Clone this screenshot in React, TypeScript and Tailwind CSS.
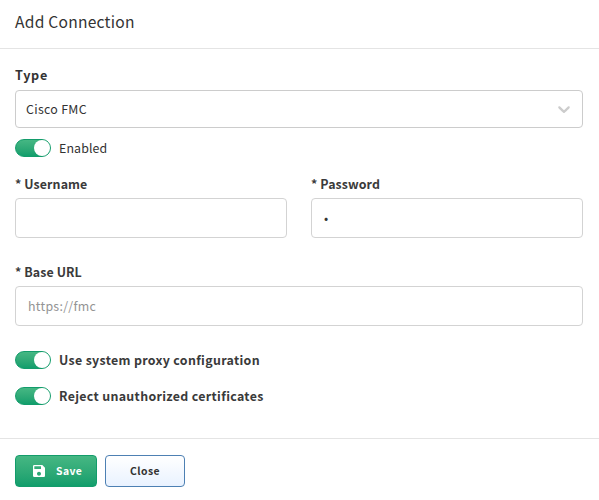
import React from 'react';

function Toggle({ label, bold = false }: { label: string; bold?: boolean }) {
  return (
    <label className="flex h-[18px] items-center gap-2">
      <span className="flex h-[18px] w-9 items-center justify-end rounded-full border border-[#139c6b] bg-linear-to-b from-[#45b783] to-[#109e6c]">
        <span className="size-4 rounded-full bg-white" />
      </span>
      <span className={bold ? 'text-[12.4px] leading-[18px] font-bold tracking-[0.33px] text-[#3a3a3a]' : 'text-[12.4px] leading-[18px] tracking-[0.1px]'}>{label}</span>
    </label>
  );
}

function Field({ label, value, placeholder, type = 'text' }: { label: string; value?: string; placeholder?: string; type?: string }) {
  return (
    <label className="flex flex-1 flex-col">
      <span className="h-6 text-[12.4px] leading-5 font-bold tracking-[0.1px] text-[#3a3a3a]">{label}</span>
      <input
        type={type}
        defaultValue={value}
        placeholder={placeholder}
        className="h-10 w-full rounded-[4px] border border-[#d3d3d3] bg-white px-3 text-[12.4px] tracking-[0.27px] outline-none placeholder:text-[#949494]"
      />
    </label>
  );
}

export default function App() {
  return (
    <div className="h-[500px] w-[599px] overflow-hidden bg-white font-['Noto_Sans_CJK_JP','Noto_Sans_CJK_SC',sans-serif] text-[#333]">
      <header className="h-[49px] border-b border-[#e4e4e4] px-[15px] pt-[7px]">
        <h1 className="text-[15.6px] leading-7 tracking-[0.24px]">Add Connection</h1>
      </header>
      <main className="h-[389px] pt-4 pr-4 pl-[15px]">
        <div className="h-[25px] text-[12.6px] leading-5 font-bold tracking-[0.7px]">Type</div>
        <div className="flex h-[38px] items-center justify-between rounded-[4px] border border-[#ccc] pr-2 pl-[10px] text-[12.4px] tracking-[0.3px]">
          <span>Cisco FMC</span>
          <svg width="20" height="20" viewBox="0 0 20 20" fill="#ccc">
            <path d="M4.516 7.548c0.436-0.446 1.043-0.481 1.576 0l3.908 3.747 3.908-3.747c0.533-0.481 1.141-0.446 1.574 0 0.436 0.445 0.408 1.197 0 1.615-0.406 0.418-4.695 4.502-4.695 4.502-0.217 0.223-0.502 0.335-0.787 0.335s-0.57-0.112-0.789-0.335c0 0-4.287-4.084-4.695-4.502s-0.436-1.17 0-1.615z" />
          </svg>
        </div>
        <div className="mt-[11px]"><Toggle label="Enabled" /></div>
        <div className="mt-[17px] flex gap-6">
          <Field label="* Username" />
          <Field label="* Password" value="•" />
        </div>
        <div className="mt-6 flex"><Field label="* Base URL" placeholder="https://fmc" /></div>
        <div className="mt-[25px] flex flex-col gap-[18px]">
          <Toggle label="Use system proxy configuration" bold />
          <Toggle label="Reject unauthorized certificates" bold />
        </div>
      </main>
      <footer className="flex gap-2 border-t border-[#e4e4e4] px-[15px] pt-4">
        <button className="flex h-8 w-[82px] items-center rounded-[4px] border border-[#139c6b] bg-linear-to-b from-[#45b783] to-[#109e6c] pl-[15px] text-[10.4px] font-bold tracking-[0.4px] text-white">
          <svg className="mr-[9px]" width="16" height="16" viewBox="0 0 24 24" fill="currentColor">
            <path d="M17 3H5a2 2 0 0 0-2 2v14a2 2 0 0 0 2 2h14c1.100 0 2-.9 2-2V7zm-5 16c-1.660 0-3-1.340-3-3s1.340-3 3-3 3 1.340 3 3-1.340 3-3 3zm3-10H5V5h10z" />
          </svg>
          Save
        </button>
        <button className="h-8 w-20 rounded-[4px] border border-[#4d80b3] bg-linear-to-b from-white to-[#e9f2ff] text-[10.4px] font-bold tracking-[0.5px]">Close</button>
      </footer>
    </div>
  );
}
